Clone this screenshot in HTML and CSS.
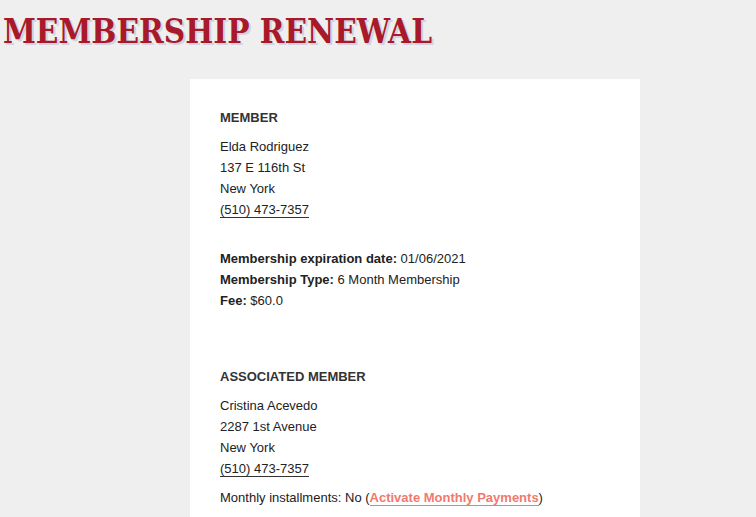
FILE: index.html
```html
<!DOCTYPE html>
<html lang="en">
<head>
    <meta charset="UTF-8">
    <meta name="viewport" content="width=device-width, initial-scale=1.0">
    <title>Membership Renewal</title>
    <link rel="stylesheet" href="styles.css">
</head>
<body>
    <h1 class="page-title">MEMBERSHIP RENEWAL</h1>

    <div class="card">
        <div class="member">
            <h3>MEMBER</h3>
            <p>Elda Rodriguez</p>
            <p>137 E 116th St</p>
            <p>New York</p>
            <p><a class="phone" href="#">(510) 473-7357</a></p>

            <div class="details">
                <p><b>Membership expiration date:</b> 01/06/2021</p>
                <p><b>Membership Type:</b> 6 Month Membership</p>
                <p><b>Fee:</b> $60.0</p>
            </div>
        </div>

        <div class="member associated">
            <h3>ASSOCIATED MEMBER</h3>
            <p>Cristina Acevedo</p>
            <p>2287 1st Avenue</p>
            <p>New York</p>
            <p><a class="phone" href="#">(510) 473-7357</a></p>
            <p class="installments">Monthly installments: No (<a class="activate" href="#">Activate Monthly Payments</a>)</p>
        </div>
    </div>
</body>
</html>
```

FILE: styles.css
```css
body {
    margin: 0;
    background: #efefef;
    font-family: "Liberation Sans", Arial, sans-serif;
    font-size: 13px;
    line-height: 21px;
    color: #222;
}
.page-title {
    margin: 0;
    padding: 10px 0 0 3px;
    font-family: "DejaVu Serif Condensed", "DejaVuSerifCondensed", "DejaVu Serif", serif;
    font-stretch: condensed;
    font-size: 33px;
    line-height: 44px;
    font-weight: bold;
    color: #a8192a;
    text-shadow: 2px 2px 0 #d2d2e2;
}
.card {
    width: 390px;
    margin: 25px 0 0 190px;
    padding: 28px 30px 30px;
    background: white;
}
.member h3 {
    margin: 0 0 8px;
    font-size: 13px;
    line-height: 21px;
    color: #333;
}
.member p {
    margin: 0;
}
.phone {
    color: #222;
    text-decoration: none;
    border-bottom: 1px solid #333;
}
.details {
    margin-top: 28px;
}
.associated {
    margin-top: 55px;
}
.installments {
    margin-top: 8px !important;
}
.activate {
    color: #f07a6e;
    font-weight: bold;
    text-decoration: none;
    border-bottom: 1px solid #f07a6e;
}
```
